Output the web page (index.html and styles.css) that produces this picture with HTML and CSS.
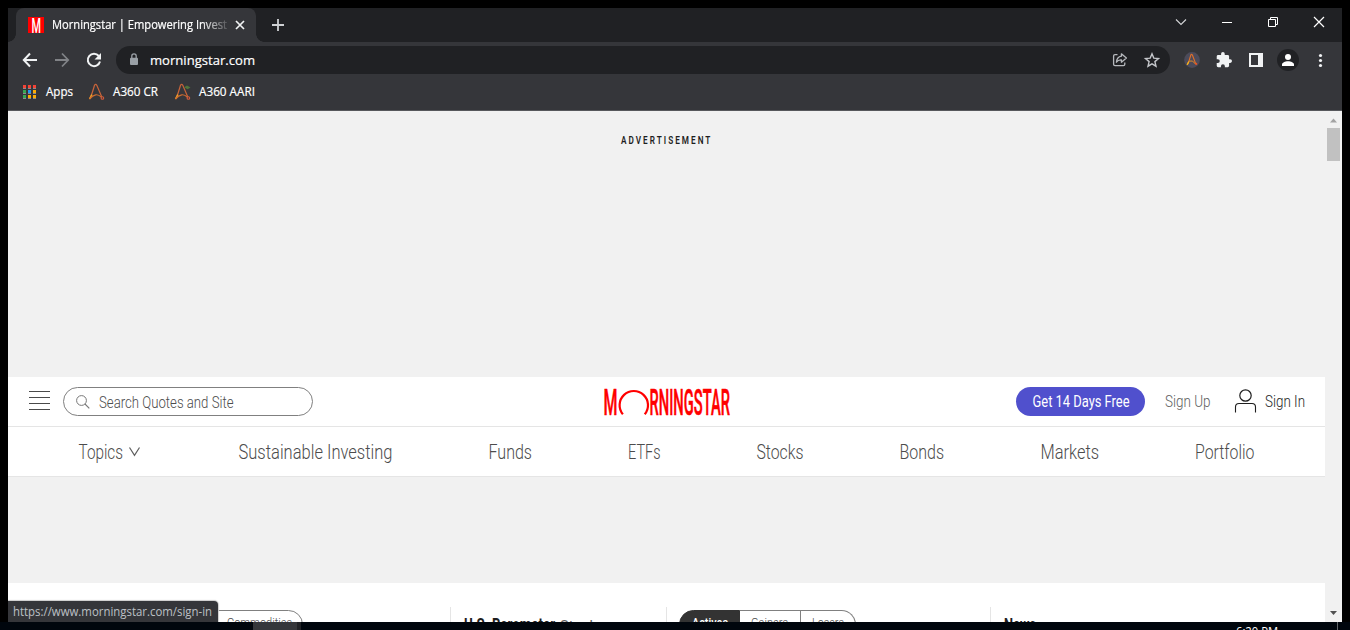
FILE: index.html
```html
<!DOCTYPE html>
<html lang="en">
<head>
<meta charset="utf-8">
<title>Morningstar | Empowering Investor Success</title>
<link rel="stylesheet" href="styles.css">
</head>
<body>
<div class="window">
  <div class="tabstrip">
    <div class="tab">
      <svg class="favicon" width="16" height="16"><rect width="16" height="16" fill="#f00"/><text class="heavy" x="3.500" y="15.500" font-size="20.500" textLength="9.500" lengthAdjust="spacingAndGlyphs" fill="#fff">M</text></svg>
      <svg class="tab-title" width="176" height="20"><text x="0" y="15" textLength="175" lengthAdjust="spacingAndGlyphs">Morningstar | Empowering Invest</text></svg>
      <svg class="tab-close" width="10" height="10" viewBox="0 0 10 10"><path d="M1 1l8 8M9 1l-8 8" stroke="#f1f3f4" stroke-width="1.7"/></svg>
    </div>
    <svg class="new-tab" width="12" height="12"><path d="M6 0v12M0 6h12" stroke="#cfd1d4" stroke-width="1.8"/></svg>
    <div class="controls">
      <svg width="12" height="12"><path d="M1 3.5l5 5 5-5" fill="none" stroke="#d5d6d8" stroke-width="1.1"/></svg>
      <svg width="12" height="12"><path d="M1 6.5h10" stroke="#fff"/></svg>
      <svg width="12" height="12"><path d="M1.5 3.5h7v7h-7zM3.5 3V1.5h7v7H9" fill="none" stroke="#fff"/></svg>
      <svg width="12" height="12"><path d="M1 1l10 10M11 1L1 11" stroke="#fff" stroke-width="1.2"/></svg>
    </div>
  </div>
  <div class="toolbar">
    <svg width="16" height="16"><path d="M15 8H2M8 1.5L1.8 8 8 14.5" fill="none" stroke="#f1f3f4" stroke-width="2"/></svg>
    <svg width="16" height="16"><path d="M1 8h13M8 1.5L14.2 8 8 14.5" fill="none" stroke="#818387" stroke-width="1.8"/></svg>
    <svg width="16" height="16"><path d="M12.8 4A6.2 6.2 0 1 0 14 9.5" fill="none" stroke="#f1f3f4" stroke-width="2"/><path d="M15 1v6.5H8.5z" fill="#f1f3f4"/></svg>
    <div class="address">
      <svg class="lock" width="10" height="13"><rect x="1" y="4.8" width="8" height="7.2" rx="1" fill="#9aa0a6"/><path d="M2.8 5V3a2.2 2.2 0 0 1 4.4 0v2" fill="none" stroke="#9aa0a6" stroke-width="1.3"/></svg>
      <svg class="url" width="110" height="20"><text x="0" y="15" textLength="105" lengthAdjust="spacingAndGlyphs">morningstar.com</text></svg>
      <svg class="share" width="16" height="16" viewBox="0 0 16 16" fill="none" stroke="#b6b9bd" stroke-width="1.3"><path d="M5.5 2.6H3Q1.6 2.6 1.6 4v8.2q0 1.4 1.4 1.4h8.4q1.4 0 1.4-1.4v-1.6"/><path d="M9.4 1.8l5 4.2-5 4.2V7.9q-3.4-.2-5 2.3.5-5.2 5-6z" stroke-linejoin="round"/></svg>
      <svg width="16" height="16" viewBox="0 0 16 16"><path d="M8 1.8l1.8 4.3 4.7.4-3.6 3.1 1.1 4.6L8 11.8l-4 2.4 1.1-4.6-3.6-3.1 4.7-.4z" fill="none" stroke="#c4c6ca" stroke-width="1.4"/></svg>
    </div>
    <svg class="ext" width="16" height="16" viewBox="0 0 16 16"><circle cx="8" cy="8" r="7.9" fill="#4c4b5a"/><path d="M3.2 12.8C5.4 9 6 6 6.800 3q.7-1.200 1.600 0l3.400 9" fill="none" stroke="#e2702a" stroke-width="1.100"/><path d="M3.200 12.800l1.900-3.700q3.800-1.500 6.200 2.800" fill="none" stroke="#e08a2a" stroke-width="1"/><path d="M3.200 12.800l1.600-3" stroke="#f3b71c" stroke-width="1.300"/><circle cx="12.200" cy="11.900" r="1.100" fill="#e55325"/></svg>
    <svg width="16" height="16" viewBox="1 1 22 22"><path fill="#f1f3f4" d="M20.5 11H19V7a2 2 0 0 0-2-2h-4V3.500a2.500 2.500 0 0 0-5 0V5H4a2 2 0 0 0-2 2v3.800h1.500a2.700 2.700 0 0 1 0 5.400H2V20a2 2 0 0 0 2 2h3.800v-1.500a2.700 2.700 0 0 1 5.400 0V22H17a2 2 0 0 0 2-2v-4h1.500a2.500 2.500 0 0 0 0-5z"/></svg>
    <svg width="16" height="16"><path d="M1 1h14v14H1zM3 3v10h7V3z" fill="#f1f3f4" fill-rule="evenodd"/></svg>
    <svg class="avatar" width="22" height="22"><circle cx="11" cy="11" r="11" fill="#202124"/><circle cx="11" cy="8" r="3" fill="#fff"/><path d="M5 17v-1.500c0-2 3-3.300 6-3.300s6 1.300 6 3.300V17z" fill="#fff"/></svg>
    <svg width="16" height="16" fill="#f1f3f4"><circle cx="8.500" cy="3.500" r="1.600"/><circle cx="8.500" cy="8.500" r="1.600"/><circle cx="8.500" cy="13.500" r="1.600"/></svg>
  </div>
  <div class="bookmarks">
    <svg width="14" height="14"><path d="M0 0h3v3H0zM5 0h3v3H5zM10 0h3v3h-3z" fill="#f44336"/><path d="M0 5h3v3H0zM0 10h3v3H0z" fill="#34a853"/><path d="M5 5h3v3H5z" fill="#2196f3"/><path d="M10 5h3v3h-3zM5 10h3v3H5zM10 10h3v3h-3z" fill="#fbac05"/><path d="M0 3h3v1H0zM5 3h3v1H5zM10 3h3v1h-3zM0 8h3v1H0zM5 8h3v1H5zM10 8h3v1h-3zM0 13h3v1H0zM5 13h3v1H5zM10 13h3v1h-3z" fill="#8b8b8d"/></svg>
    <svg class="apps" width="30" height="20"><text x="0" y="15" textLength="27" lengthAdjust="spacingAndGlyphs">Apps</text></svg>
    <svg class="bm-icon" width="17" height="18" viewBox="0 0 17 18"><path d="M1.500 16C4.300 11 5.200 7 6.400 2.500Q7.600.2 8.900 2.500L13.800 14" fill="none" stroke="#c8643a" stroke-width="1.200"/><path d="M1.500 16l2.500-4.300" stroke="#e8a824" stroke-width="1.400"/><path d="M1.500 16Q8 8.500 13.300 14.200" fill="none" stroke="#cf6c30" stroke-width="1.200"/><circle cx="14.400" cy="15" r="1.300" fill="none" stroke="#cf5b3c" stroke-width="1.100"/></svg>
    <svg class="cr" width="47" height="20"><text x="0" y="15" textLength="45" lengthAdjust="spacingAndGlyphs">A360 CR</text></svg>
    <svg class="bm-icon" width="17" height="18" viewBox="0 0 17 18"><path d="M1.500 16C4.300 11 5.200 7 6.400 2.500Q7.600.2 8.900 2.500L13.800 14" fill="none" stroke="#c8643a" stroke-width="1.200"/><path d="M1.500 16l2.500-4.300" stroke="#e8a824" stroke-width="1.400"/><path d="M1.500 16Q8 8.500 13.300 14.200" fill="none" stroke="#cf6c30" stroke-width="1.200"/><circle cx="14.400" cy="15" r="1.300" fill="none" stroke="#cf5b3c" stroke-width="1.100"/><path d="M10 4.300l3-1.800 3.500 2-3 1.800z" fill="#50743a"/></svg>
    <svg class="aari" width="58" height="20"><text x="0" y="15" textLength="56" lengthAdjust="spacingAndGlyphs">A360 AARI</text></svg>
  </div>
  <div class="viewport">
    <main class="page">
      <div class="ad"><svg width="92" height="12"><g transform="scale(.82 1)"><text x="0" y="10" textLength="109">ADVERTISEMENT</text></g></svg></div>
      <header class="masthead">
        <svg class="burger" width="21" height="20"><path d="M0 .5h21M0 6.500h21M0 12.500h21M0 18.500h21" stroke="#4a4a4a"/></svg>
        <div class="search">
          <svg width="14" height="14"><circle cx="5.500" cy="5.500" r="4.900" fill="none" stroke="#777"/><path d="M9 9l4.300 4.300" stroke="#777" stroke-width="1.100"/></svg>
          <svg class="cond hint" width="138" height="20"><text x="0" y="15" textLength="134.500" lengthAdjust="spacingAndGlyphs">Search Quotes and Site</text></svg>
        </div>
        <svg class="logo" width="128" height="30" fill="#f00"><text class="heavy mark" x=".5" y="27.500" font-size="37" textLength="14" lengthAdjust="spacingAndGlyphs">M</text><path d="M19.900 27.300A14.200 14.200 0 1 1 41.700 27.300" fill="none" stroke="#f00" stroke-width="2.200"/><text class="heavy mark" x="46.500" y="27.500" font-size="37" textLength="80.500" lengthAdjust="spacingAndGlyphs">RNINGSTAR</text></svg>
        <div class="trial"><svg class="cond" width="98" height="20"><text x="0.5" y="15" textLength="97" lengthAdjust="spacingAndGlyphs">Get 14 Days Free</text></svg></div>
        <svg class="cond signup" width="46" height="20"><text x="0" y="15" textLength="45.500" lengthAdjust="spacingAndGlyphs">Sign Up</text></svg>
        <svg class="person" width="22" height="24" fill="none" stroke="#1e1e1e"><circle cx="10.500" cy="6.500" r="5.700" stroke-width="1.200"/><path d="M.5 23.500V18Q.5 14.500 4 14.500h13q3.500 0 3.500 3.500v5.500" stroke-width="1.100"/></svg>
        <svg class="cond signin" width="42" height="20"><text x="0" y="15" textLength="40" lengthAdjust="spacingAndGlyphs">Sign In</text></svg>
      </header>
      <nav class="nav">
        <svg width="64" height="24"><text x="0.5" y="18" textLength="44.500" lengthAdjust="spacingAndGlyphs">Topics</text><path d="M51.500 6.500l5 7.800 5-7.800" fill="none" stroke="#5e5e5e" stroke-width="1.200"/></svg>
        <svg width="154" height="24"><text x="0.500" y="18" textLength="154" lengthAdjust="spacingAndGlyphs">Sustainable Investing</text></svg>
        <svg width="44" height="24"><text x="0.500" y="18" textLength="43.500" lengthAdjust="spacingAndGlyphs">Funds</text></svg>
        <svg width="32" height="24"><text x="0" y="18" textLength="32.500" lengthAdjust="spacingAndGlyphs">ETFs</text></svg>
        <svg width="47" height="24"><text x="0.500" y="18" textLength="47" lengthAdjust="spacingAndGlyphs">Stocks</text></svg>
        <svg width="45" height="24"><text x="0.500" y="18" textLength="44.500" lengthAdjust="spacingAndGlyphs">Bonds</text></svg>
        <svg width="59" height="24"><text x="0.500" y="18" textLength="58.500" lengthAdjust="spacingAndGlyphs">Markets</text></svg>
        <svg width="60" height="24"><text x="0" y="18" textLength="59.500" lengthAdjust="spacingAndGlyphs">Portfolio</text></svg>
      </nav>
      <div class="band"></div>
      <section class="widgets">
        <div class="col market"><div class="pill"><svg class="cond small" width="66" height="20"><text x="0" y="11" textLength="65" lengthAdjust="spacingAndGlyphs">Commodities</text></svg></div></div>
        <div class="col barometer"><svg width="135" height="20"><text class="bold" x="0" y="17" textLength="91" lengthAdjust="spacingAndGlyphs">U.S. Barometer</text><text class="sub" x="96" y="16.500" textLength="37" lengthAdjust="spacingAndGlyphs">Stock</text></svg></div>
        <div class="col movers">
          <div class="seg active"><svg class="cond small" width="38" height="20"><text x="0" y="11" textLength="36" lengthAdjust="spacingAndGlyphs">Actives</text></svg></div>
          <div class="seg"><svg class="cond small" width="39" height="20"><text x="0" y="11" textLength="37" lengthAdjust="spacingAndGlyphs">Gainers</text></svg></div>
          <div class="seg last"><svg class="cond small" width="33" height="20"><text x="0" y="11" textLength="32" lengthAdjust="spacingAndGlyphs">Losers</text></svg></div>
        </div>
        <div class="col news"><svg width="40" height="20"><text class="bold" x="0" y="17" textLength="32" lengthAdjust="spacingAndGlyphs">News</text></svg></div>
      </section>
    </main>
    <div class="scrollbar">
      <svg width="17" height="17"><path d="M5 11.500L8.500 7.500 12 11.500z" fill="#a3a3a3"/></svg>
      <div class="thumb"></div>
      <svg class="down" width="17" height="17"><path d="M5 6l3.500 4L12 6z" fill="#505050"/></svg>
    </div>
    <div class="status"><svg width="202" height="20"><text x="0" y="15" textLength="199" lengthAdjust="spacingAndGlyphs">https://www.morningstar.com/sign-in</text></svg></div>
  </div>
</div>
<div class="taskbar"><div class="task"></div><div class="task-edge"></div><svg class="clock" width="44" height="8"><text x="0" y="14" textLength="42" lengthAdjust="spacingAndGlyphs">6:20 PM</text></svg><div class="desk-edge"></div></div>
</body>
</html>
```
FILE: styles.css
```css
* { box-sizing: border-box; }
body { margin: 0; width: 1350px; height: 630px; overflow: hidden; background: #000; font: 12px "Open Sans", sans-serif; }
svg { display: block; flex: none; overflow: visible; }
.window { width: 1334px; height: 614px; margin: 8px 8px 0; overflow: hidden; background: #35363a; }

.tabstrip { display: flex; height: 34px; background: #202124; }
.tab { position: relative; display: flex; align-items: flex-start; width: 240px; margin-left: 8px; padding: 9px 0 0 12px; background: #35363a; border-radius: 8px 8px 0 0; }
.tab::before, .tab::after { content: ""; position: absolute; bottom: 0; width: 8px; height: 8px; }
.tab::before { left: -8px; background: radial-gradient(circle at 0 0, #202124 7.5px, #35363a 8px); }
.tab::after { right: -8px; background: radial-gradient(circle at 100% 0, #202124 7.5px, #35363a 8px); }
.tab-title { margin: -3px 0 0 8px; fill: #fff; stroke: #fff; stroke-width: .2px; -webkit-mask-image: linear-gradient(90deg, #000 150px, transparent 180px); mask-image: linear-gradient(90deg, #000 150px, transparent 180px); }
.tab-close { margin: 3px 0 0 7px; }
.new-tab { margin: 11px 0 0 16px; }
.controls { display: flex; gap: 34px; margin: 8px 17px 0 auto; }

.toolbar { display: flex; align-items: center; gap: 16px; height: 36px; padding-left: 14px; }
.address { display: flex; align-items: center; width: 1054px; height: 28px; margin-left: -2px; padding: 0 10px 0 13px; border-radius: 14px; background: #202124; }
.address .share { margin: 0 16px 0 auto; }
.lock { margin-top: -1px; }
.url { margin-left: 11px; font-size: 13.3px; fill: #fff; stroke: #fff; stroke-width: .2px; }
.ext { margin-left: -2px; }
.avatar { margin: 0 -3px; }

.bookmarks { display: flex; align-items: flex-start; height: 33px; padding: 7px 0 0 15px; border-bottom: 1px solid #57585c; fill: #fff; }
.bookmarks .apps, .bookmarks .cr, .bookmarks .aari { stroke: #fff; stroke-width: .2px; }
.bookmarks .apps { margin: -4px 0 0 9px; }
.bookmarks .bm-icon { margin: -2px 0 0 12px; }
.bookmarks .cr, .bookmarks .aari { margin: -4px 0 0 8px; }
.bookmarks .cr + .bm-icon { margin-left: 14px; }

.viewport { position: relative; display: flex; height: 511px; background: #fff; }
.page { width: 1317px; height: 511px; overflow: hidden; font-family: Roboto, sans-serif; }
.ad { display: flex; justify-content: center; height: 266px; padding-top: 23px; background: #f1f1f1; font-size: 10px; font-weight: 600; fill: #1e1e1e; }
.masthead { display: flex; align-items: flex-start; height: 50px; border-bottom: 1px solid #e5e5e5; }
.burger { margin: 14px 0 0 21px; }
.search { display: flex; width: 250px; height: 29px; margin: 10px 0 0 13px; padding: 7px 0 0 12px; border: 1px solid #808080; border-radius: 15px; }
.hint { margin: -2px 0 0 9px; fill: #4c4c4c; }
.cond { font-size: 16px; font-weight: 300; }
.logo { margin: 10px 0 0 290px; }
.heavy { font-family: Roboto, sans-serif; font-weight: 500; }
.mark { stroke: #f00; stroke-width: .6px; }
.trial { width: 129px; height: 29px; margin: 10px 0 0 285px; padding: 5px 0 0 16px; border-radius: 15px; background: #5050cd; fill: #fff; }
.trial .cond { font-weight: 400; }
.signup { margin: 15px 0 0 20px; fill: #5e5e5e; }
.person { margin: 12px 0 0 24px; }
.signin { margin: 15px 0 0 8px; fill: #1e1e1e; }
.nav { display: flex; gap: 96px; height: 50px; padding: 14px 0 0 70px; border-bottom: 1px solid #e5e5e5; font-size: 19.5px; font-weight: 300; fill: #4c4c4c; }
.band { height: 106px; background: #f1f1f1; }
.widgets { display: flex; height: 39px; padding-top: 24px; overflow: hidden; }
.col { height: 40px; }
.market { width: 442px; padding: 3px 0 0 195px; }
.pill { width: 100px; height: 29px; padding: 5px 0 0 23px; border: 1px solid #808080; border-radius: 0 15px 15px 0; fill: #4c4c4c; }
.small { font-size: 13px; }
.barometer { width: 216px; padding: 7px 0 0 13px; border-left: 1px solid #e5e5e5; }
.bold { font-size: 18px; font-weight: 700; fill: #1e1e1e; }
.sub { font-size: 14px; fill: #5e5e5e; }
.movers { display: flex; width: 324px; padding: 3px 0 0 12px; border-left: 1px solid #e5e5e5; }
.seg { width: 61px; height: 29px; padding: 5px 0 0 11px; border: 1px solid #808080; border-left: 0; fill: #4c4c4c; }
.seg.active { padding-left: 12px; border: 1px solid #333; border-radius: 15px 0 0 15px; background: #333; fill: #fff; }
.seg.active .small { font-weight: 500; }
.seg.last { width: 55px; border-radius: 0 15px 15px 0; }
.news { flex: 1; padding: 7px 0 0 13px; border-left: 1px solid #e5e5e5; }

.scrollbar { display: flex; flex-direction: column; width: 17px; background: #f1f1f1; }
.thumb { width: 13px; height: 33px; margin-left: 2px; background: #c1c1c1; }
.down { margin-top: auto; }
.status { position: absolute; left: 0; bottom: 0; width: 210px; height: 21px; padding-left: 5px; border-radius: 0 4px 0 0; background: #35363a; fill: #bdc1c6; box-shadow: 0 0 1px 1px #ccc; }
.taskbar { display: flex; height: 8px; overflow: hidden; background: #00060d; }
.task { width: 44px; margin-left: 253px; background: #35373b; }
.task-edge { width: 4px; background: #202226; }
.clock { margin-left: 935px; font-size: 12px; fill: #fff; }
.desk-edge { width: 1px; margin-left: 57px; background: #62666a; }
```
